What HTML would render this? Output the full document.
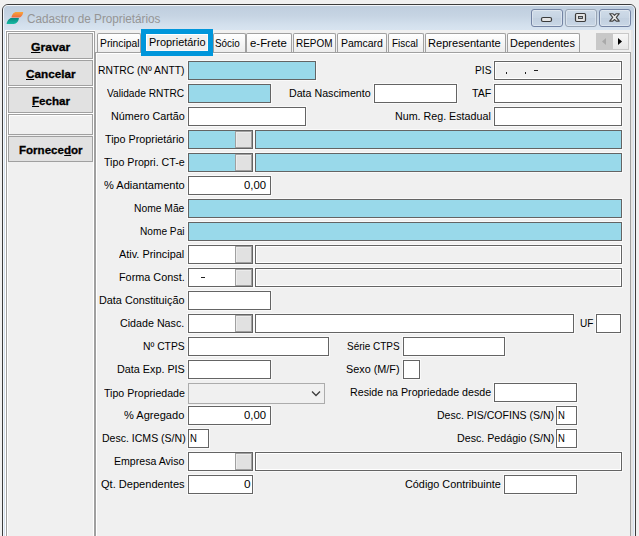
<!DOCTYPE html>
<html><head><meta charset="utf-8">
<style>
*{box-sizing:border-box}
html,body{margin:0;padding:0}
body{width:639px;height:536px;overflow:hidden;position:relative;background:#f0f0f0;font-family:"Liberation Sans",sans-serif}
.a{position:absolute}
.t{position:absolute;white-space:nowrap;line-height:13px;transform-origin:0 0;font-family:"Liberation Sans",sans-serif}
.t u{text-decoration:none;border-bottom:1px solid #000;display:inline-block;line-height:9px}
.in{position:absolute;height:19px;border:1px solid #646464;background:#fff;box-shadow:0 0 0 1px #f9f9f9}
.bl{background:#99d9ea}
.gr{background:#f0f0f0;box-shadow:0 0 0 1px #f9f9f9,inset 0 0 0 1px #fff}
.lk{position:absolute;top:0;right:0;width:17px;height:17px;background:#e1e1e1;border:1px solid #a0a0a0;box-shadow:inset 1px 1px 0 #ececec}
.btn{position:absolute;left:8px;width:85px;height:26px;background:#e1e1e1;border:1px solid #a0a0a0}
.tab{position:absolute;top:33px;height:20px;border:1px solid #a0a0a0;border-bottom:none;border-radius:2px 2px 0 0;background:linear-gradient(#ffffff,#f3f3f3 60%,#ebebeb)}
.tb{position:absolute;top:9px;width:32px;height:18px;border:1px solid #7383a3;border-radius:3px;background:linear-gradient(#cfdbe8,#c6d4e3 50%,#c1cfdf 51%,#c9d7e6);box-shadow:inset 0 0 0 1px rgba(255,255,255,.35)}
</style></head><body>

<!-- window frame -->
<div class="a" style="left:2px;top:4px;width:634px;height:560px;border:1px solid #3c3c3c;border-radius:6px 6px 0 0;background:#d6e2ef"></div>
<div class="a" style="left:3px;top:5px;width:632px;height:560px;border:1px solid rgba(255,255,255,.7);border-radius:5px 5px 0 0;border-bottom:none"></div>
<!-- title bar gradient -->
<div class="a" style="left:4px;top:6px;width:630px;height:24px;border-radius:4px 4px 0 0;background:linear-gradient(#bfcede,#c6d4e3 40%,#d3e0ed 80%,#d8e4f0)"></div>

<!-- icon -->
<svg class="a" style="left:0;top:0" width="30" height="30" viewBox="0 0 30 30">
<defs>
<linearGradient id="og" x1="0" y1="0" x2="0" y2="1"><stop offset="0" stop-color="#f9a83a"/><stop offset="1" stop-color="#ee6640"/></linearGradient>
<linearGradient id="tg" x1="0" y1="0" x2="0" y2="1"><stop offset="0" stop-color="#07877f"/><stop offset="1" stop-color="#16bca4"/></linearGradient>
</defs>
<path d="M16.2 12 L23.2 12 C23.2 13.8 22 16.2 20.2 17.2 C19.6 17.5 19 17.6 18.4 17.6 L11.4 17.6 C11.5 15.6 12.8 13.2 14.6 12.4 C15.1 12.1 15.6 12 16.2 12 Z" fill="url(#og)"/>
<path d="M11.4 18 L18.9 18 C18.9 20 17.6 22.6 15.6 23.6 C15 23.9 14.4 24 13.8 24 L6.6 24 C6.7 22 8 19.4 10 18.4 C10.5 18.1 10.9 18 11.4 18 Z" fill="url(#tg)"/>
</svg>

<!-- title buttons -->
<div class="tb" style="left:531px"></div>
<div class="tb" style="left:565px;border-color:#97a3b3"></div>
<div class="tb" style="left:599px"></div>
<svg class="a" style="left:528px;top:4px" width="108" height="26" viewBox="0 0 108 26">
<rect x="13.5" y="13.5" width="10" height="4" rx="1.5" fill="#e4e4e4" stroke="#3b3b3b" stroke-width="1.2"/>
<rect x="47.5" y="9.5" width="10" height="8" rx="1.2" fill="#e4e4e4" stroke="#3b3b3b" stroke-width="1.2"/>
<rect x="50.5" y="12.5" width="4" height="2" fill="#aab6c4" stroke="#3b3b3b" stroke-width="0.9"/>
<path d="M81.7 9.7 L84.8 9.7 L86.5 11.3 L88.2 9.7 L91.3 9.7 L88.3 13.4 L91.3 17.1 L88.2 17.1 L86.5 15.5 L84.8 17.1 L81.7 17.1 L84.7 13.4 Z" fill="#e8e8e8" stroke="#434343" stroke-width="1.1" stroke-linejoin="round"/>
</svg>

<!-- client area -->
<div class="a" style="left:5px;top:30px;width:628px;height:520px;background:#f0f0f0;border-left:1px solid #fff"></div>
<div class="a" style="left:5px;top:30px;width:90px;height:1px;background:#fff"></div>

<div class="a" style="left:631px;top:30px;width:2px;height:520px;background:#e4e4e4"></div>
<!-- left panel edges -->
<div class="a" style="left:6px;top:31px;width:1px;height:510px;background:#a0a0a0"></div>
<div class="a" style="left:6px;top:31px;width:89px;height:1px;background:#a0a0a0"></div>
<div class="a" style="left:7px;top:32px;width:1px;height:510px;background:#fff"></div>
<div class="a" style="left:7px;top:32px;width:86px;height:1px;background:#fff"></div>
<div class="a" style="left:93px;top:32px;width:1px;height:510px;background:#fff"></div>
<div class="a" style="left:94px;top:31px;width:1px;height:510px;background:#a0a0a0"></div>

<!-- left buttons -->
<div class="btn" style="top:33px"></div>
<div class="a" style="left:8px;top:59px;width:85px;height:1px;background:#fff"></div>
<div class="btn" style="top:60px"></div>
<div class="a" style="left:8px;top:86px;width:85px;height:1px;background:#fff"></div>
<div class="btn" style="top:87px"></div>
<div class="a" style="left:8px;top:113px;width:85px;height:1px;background:#fff"></div>
<div class="a" style="left:8px;top:114px;width:85px;height:21px;border:1px solid #a0a0a0;background:#f0f0f0;box-shadow:inset 1px 1px 0 #fff"></div>
<div class="btn" style="top:136px"></div>

<!-- tabs strip -->
<div class="tab" style="left:97px;width:44px"></div>
<div class="a" style="left:141px;top:33px;width:72px;height:20px;background:#f0f0f0"></div>
<div class="tab" style="left:213px;width:33px"></div>
<div class="tab" style="left:246px;width:46px"></div>
<div class="tab" style="left:293px;width:43px"></div>
<div class="tab" style="left:337px;width:50px"></div>
<div class="tab" style="left:388px;width:36px"></div>
<div class="tab" style="left:425px;width:81px"></div>
<div class="tab" style="left:507px;width:73px"></div>

<!-- tab scroller -->
<div class="a" style="left:596px;top:33px;width:33px;height:17px;background:#c8c8c8"></div>
<div class="a" style="left:613px;top:34px;width:15px;height:15px;background:linear-gradient(#f7f7f7,#e6e6e6)"></div>
<svg class="a" style="left:596px;top:33px" width="33" height="17" viewBox="0 0 33 17">
<path d="M10 5 L6 8.5 L10 12 Z" fill="#a9a9a9"/>
<path d="M22 5 L26 8.5 L22 12 Z" fill="#000"/>
</svg>

<!-- content frame -->
<div class="a" style="left:95px;top:52px;width:536px;height:500px;border:1px solid #a0a0a0;background:#f0f0f0;box-shadow:inset 1px 1px 0 #fff"></div>

<!-- annotation rectangle -->
<div class="a" style="left:141px;top:29px;width:72px;height:27px;border:5px solid #0096db;box-shadow:inset 1px 1px 0 #fff,inset -1px -1px 0 #fafafa"></div>

<!-- inputs -->
<div class="in bl" style="left:188px;top:61px;width:128px"></div>
<div class="in gr" style="left:494px;top:61px;width:128px"></div>

<div class="in bl" style="left:188px;top:84px;width:83px"></div>
<div class="in" style="left:374px;top:84px;width:83px"></div>
<div class="in" style="left:494px;top:84px;width:128px"></div>

<div class="in" style="left:188px;top:107px;width:118px"></div>
<div class="in" style="left:494px;top:107px;width:128px"></div>

<div class="in bl" style="left:188px;top:130px;width:65px"><div class="lk"></div></div>
<div class="in bl" style="left:255px;top:130px;width:367px"></div>

<div class="in bl" style="left:188px;top:153px;width:65px"><div class="lk"></div></div>
<div class="in bl" style="left:255px;top:153px;width:367px"></div>

<div class="in" style="left:188px;top:176px;width:83px"></div>

<div class="in bl" style="left:188px;top:199px;width:434px"></div>
<div class="in bl" style="left:188px;top:222px;width:434px"></div>

<div class="in" style="left:188px;top:245px;width:65px"><div class="lk"></div></div>
<div class="in gr" style="left:255px;top:245px;width:367px"></div>

<div class="in" style="left:188px;top:268px;width:65px"><div class="lk"></div></div>
<div class="in gr" style="left:255px;top:268px;width:367px"></div>

<div class="in" style="left:188px;top:291px;width:83px"></div>

<div class="in" style="left:188px;top:314px;width:65px"><div class="lk"></div></div>
<div class="in" style="left:255px;top:314px;width:319px"></div>
<div class="in" style="left:596px;top:314px;width:25px"></div>

<div class="in" style="left:188px;top:337px;width:141px"></div>
<div class="in" style="left:403px;top:337px;width:102px"></div>

<div class="in" style="left:188px;top:360px;width:83px"></div>
<div class="in" style="left:403px;top:360px;width:17px"></div>

<div class="a" style="left:188px;top:383px;width:137px;height:21px;border:1px solid #acacac;background:#f0f0f0"></div>
<svg class="a" style="left:310px;top:389px" width="12" height="9" viewBox="0 0 12 9"><path d="M2 2.5 L6 6.5 L10 2.5" fill="none" stroke="#3c3c3c" stroke-width="1.3"/></svg>
<div class="in" style="left:494px;top:383px;width:83px"></div>

<div class="in" style="left:188px;top:406px;width:83px"></div>
<div class="in" style="left:556px;top:406px;width:21px"></div>

<div class="in" style="left:188px;top:429px;width:21px"></div>
<div class="in" style="left:556px;top:429px;width:21px"></div>

<div class="in" style="left:188px;top:452px;width:65px"><div class="lk"></div></div>
<div class="in gr" style="left:255px;top:452px;width:367px"></div>

<div class="in" style="left:188px;top:475px;width:65px"></div>
<div class="in" style="left:504px;top:475px;width:73px"></div>

<!-- PIS mask -->
<div class="a" style="left:506px;top:72px;width:1px;height:2px;background:#202020"></div>
<div class="a" style="left:525px;top:72px;width:1px;height:2px;background:#202020"></div>
<div class="a" style="left:534px;top:70px;width:4px;height:1px;background:#202020"></div>
<div class="a" style="left:201px;top:277px;width:4px;height:1px;background:#202020"></div>

<div class='t' style='left:98.00px;top:64px;font-size:11px;color:#000;transform:scaleX(0.9405)'>RNTRC (Nº ANTT)</div>
<div class='t' style='left:107.30px;top:87px;font-size:11px;color:#000;transform:scaleX(0.9241)'>Validade RNTRC</div>
<div class='t' style='left:110.80px;top:110px;font-size:11px;color:#000;transform:scaleX(0.9811)'>Número Cartão</div>
<div class='t' style='left:105.30px;top:133px;font-size:11px;color:#000;transform:scaleX(0.9799)'>Tipo Proprietário</div>
<div class='t' style='left:103.90px;top:156px;font-size:11px;color:#000;transform:scaleX(0.9679)'>Tipo Propri. CT-e</div>
<div class='t' style='left:103.90px;top:179px;font-size:11px;color:#000;transform:scaleX(1.0073)'>% Adiantamento</div>
<div class='t' style='left:134.20px;top:202px;font-size:11px;color:#000;transform:scaleX(0.9357)'>Nome Mãe</div>
<div class='t' style='left:140.00px;top:225px;font-size:11px;color:#000;transform:scaleX(0.9218)'>Nome Pai</div>
<div class='t' style='left:119.40px;top:248px;font-size:11px;color:#000;transform:scaleX(0.9903)'>Ativ. Principal</div>
<div class='t' style='left:118.90px;top:271px;font-size:11px;color:#000;transform:scaleX(0.9857)'>Forma Const.</div>
<div class='t' style='left:99.10px;top:294px;font-size:11px;color:#000;transform:scaleX(0.9845)'>Data Constituição</div>
<div class='t' style='left:120.30px;top:317px;font-size:11px;color:#000;transform:scaleX(0.9731)'>Cidade Nasc.</div>
<div class='t' style='left:142.80px;top:340px;font-size:11px;color:#000;transform:scaleX(0.9410)'>Nº CTPS</div>
<div class='t' style='left:116.80px;top:363px;font-size:11px;color:#000;transform:scaleX(0.9810)'>Data Exp. PIS</div>
<div class='t' style='left:103.70px;top:387px;font-size:11px;color:#000;transform:scaleX(0.9628)'>Tipo Propriedade</div>
<div class='t' style='left:124.30px;top:409px;font-size:11px;color:#000;transform:scaleX(1.0062)'>% Agregado</div>
<div class='t' style='left:101.80px;top:432px;font-size:11px;color:#000;transform:scaleX(0.9571)'>Desc. ICMS (S/N)</div>
<div class='t' style='left:114.20px;top:455px;font-size:11px;color:#000;transform:scaleX(0.9616)'>Empresa Aviso</div>
<div class='t' style='left:101.00px;top:478px;font-size:11px;color:#000;transform:scaleX(1.0052)'>Qt. Dependentes</div>
<div class='t' style='left:474.50px;top:64px;font-size:11px;color:#000;transform:scaleX(0.9262)'>PIS</div>
<div class='t' style='left:289.10px;top:87px;font-size:11px;color:#000;transform:scaleX(0.9679)'>Data Nascimento</div>
<div class='t' style='left:471.50px;top:87px;font-size:11px;color:#000;transform:scaleX(0.9647)'>TAF</div>
<div class='t' style='left:395.00px;top:110px;font-size:11px;color:#000;transform:scaleX(0.9729)'>Num. Reg. Estadual</div>
<div class='t' style='left:580.00px;top:317px;font-size:11px;color:#000;transform:scaleX(0.9143)'>UF</div>
<div class='t' style='left:347.00px;top:340px;font-size:11px;color:#000;transform:scaleX(0.9058)'>Série CTPS</div>
<div class='t' style='left:346.10px;top:363px;font-size:11px;color:#000;transform:scaleX(0.9849)'>Sexo (M/F)</div>
<div class='t' style='left:349.90px;top:386px;font-size:11px;color:#000;transform:scaleX(0.9699)'>Reside na Propriedade desde</div>
<div class='t' style='left:437.00px;top:409px;font-size:11px;color:#000;transform:scaleX(0.9575)'>Desc. PIS/COFINS (S/N)</div>
<div class='t' style='left:456.80px;top:432px;font-size:11px;color:#000;transform:scaleX(0.9701)'>Desc. Pedágio (S/N)</div>
<div class='t' style='left:405.10px;top:478px;font-size:11px;color:#000;transform:scaleX(0.9851)'>Código Contribuinte</div>
<div class='t' style='left:99.90px;top:37px;font-size:11px;color:#000;transform:scaleX(0.9372)'>Principal</div>
<div class='t' style='left:149.00px;top:36px;font-size:11px;color:#000;transform:scaleX(0.9936)'>Proprietário</div>
<div class='t' style='left:215.10px;top:37px;font-size:11px;color:#000;transform:scaleX(0.8971)'>Sócio</div>
<div class='t' style='left:249.75px;top:37px;font-size:11px;color:#000;transform:scaleX(1.0372)'>e-Frete</div>
<div class='t' style='left:295.50px;top:37px;font-size:11px;color:#000;transform:scaleX(0.9023)'>REPOM</div>
<div class='t' style='left:340.50px;top:37px;font-size:11px;color:#000;transform:scaleX(0.9528)'>Pamcard</div>
<div class='t' style='left:392.25px;top:37px;font-size:11px;color:#000;transform:scaleX(0.9014)'>Fiscal</div>
<div class='t' style='left:428.00px;top:37px;font-size:11px;color:#000;transform:scaleX(1.0081)'>Representante</div>
<div class='t' style='left:509.90px;top:37px;font-size:11px;color:#000;transform:scaleX(0.9914)'>Dependentes</div>
<div class='t' style='left:27.10px;top:13px;font-size:12px;color:#959595;transform:scaleX(0.9762)'>Cadastro de Proprietários</div>
<div class='t' style='left:31.00px;top:41px;font-size:11.5px;font-weight:700;-webkit-text-stroke:0.3px #000;color:#000;transform:scaleX(1.0584)'><u>G</u>ravar</div>
<div class='t' style='left:25.50px;top:68px;font-size:11.5px;font-weight:700;-webkit-text-stroke:0.3px #000;color:#000;transform:scaleX(1.0190)'><u>C</u>ancelar</div>
<div class='t' style='left:32.00px;top:95px;font-size:11.5px;font-weight:700;-webkit-text-stroke:0.3px #000;color:#000;transform:scaleX(1.0077)'><u>F</u>echar</div>
<div class='t' style='left:19.00px;top:144px;font-size:11.5px;font-weight:700;-webkit-text-stroke:0.3px #000;color:#000;transform:scaleX(1.0038)'>Fornece<u>d</u>or</div>
<div class='t' style='left:243.50px;top:179px;font-size:11px;color:#000;transform:scaleX(1.0283)'>0,00</div>
<div class='t' style='left:243.50px;top:409px;font-size:11px;color:#000;transform:scaleX(1.0283)'>0,00</div>
<div class='t' style='left:243.50px;top:478px;font-size:11px;color:#000;transform:scaleX(1.0732)'>0</div>
<div class='t' style='left:189.50px;top:432px;font-size:11px;color:#000;transform:scaleX(0.8629)'>N</div>
<div class='t' style='left:557.50px;top:409px;font-size:11px;color:#000;transform:scaleX(0.8629)'>N</div>
<div class='t' style='left:557.50px;top:432px;font-size:11px;color:#000;transform:scaleX(0.8629)'>N</div>

</body></html>
